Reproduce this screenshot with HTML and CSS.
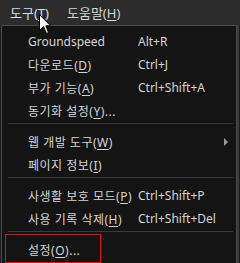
FILE: index.html
```html
<!DOCTYPE html>
<html lang="ko">
<head>
  <meta charset="UTF-8">
  <title>도구 메뉴</title>
  <link rel="stylesheet" href="styles.css">
</head>
<body>
  <div class="menubar">
    <div class="menu-title active">도구(<u>T</u>)</div>
    <div class="menu-title">도움말(<u>H</u>)</div>
  </div>

  <div class="dropdown">
    <div class="item"><span>Groundspeed</span><span class="key">Alt+R</span></div>
    <div class="item"><span class="ko">다운로드(<u>D</u>)</span><span class="key">Ctrl+J</span></div>
    <div class="item"><span class="ko">부가 기능(<u>A</u>)</span><span class="key">Ctrl+Shift+A</span></div>
    <div class="item"><span class="ko">동기화 설정(<u>Y</u>)...</span><span class="key"></span></div>
    <div class="sep"></div>
    <div class="item submenu"><span class="ko">웹 개발 도구(<u>W</u>)</span><span class="key"></span></div>
    <div class="item"><span class="ko">페이지 정보(<u>I</u>)</span><span class="key"></span></div>
    <div class="sep"></div>
    <div class="item"><span class="ko">사생활 보호 모드(<u>P</u>)</span><span class="key">Ctrl+Shift+P</span></div>
    <div class="item"><span class="ko">사용 기록 삭제(<u>H</u>)</span><span class="key">Ctrl+Shift+Del</span></div>
    <div class="sep"></div>
    <div class="item"><span class="ko">설정(<u>O</u>)...</span><span class="key"></span></div>
  </div>

  <div class="highlight"></div>

  <svg class="cursor" width="13" height="21" viewBox="0 0 13 21">
    <path d="M0.5 0.5 L0.5 16.5 L4.5 12.5 L7.5 19.5 L9.5 18.5 L6.8 11.8 L11.5 11.8 Z" fill="#fff" stroke="#000" stroke-width="1"/>
  </svg>
</body>
</html>
```

FILE: styles.css
```css
body {
  margin: 0;
  width: 240px;
  height: 263px;
  overflow: hidden;
  position: relative;
  background: #1c1c22;
  font-family: "Noto Sans", "Noto Sans CJK KR", sans-serif;
  font-size: 12px;
  color: #d4d4d4;
}
u {
  text-decoration: underline;
  text-underline-offset: 2px;
}
.menubar {
  height: 25px;
  display: flex;
  align-items: center;
  gap: 18px;
  padding-left: 10px;
  background: #2c2c2c;
  font-size: 13px;
}
.menu-title.active {
  color: #cfe0f0;
}
.dropdown {
  box-sizing: border-box;
  margin-left: 1px;
  width: 236px;
  height: 238px;
  border: 1px solid #4a4a4a;
  border-bottom: none;
  background: #141414;
  padding-top: 4px;
  box-shadow: 2px 0 0 #3a3a3a;
}
.item {
  height: 23px;
  display: grid;
  grid-template-columns: 110px 1fr;
  align-items: center;
  padding-left: 26px;
  position: relative;
  white-space: nowrap;
}
.ko {
  letter-spacing: 0.5px;
}
.submenu::after {
  content: "";
  position: absolute;
  right: 8px;
  top: 8px;
  border-left: 4px solid #9a9a9a;
  border-top: 4px solid transparent;
  border-bottom: 4px solid transparent;
}
.sep {
  height: 1px;
  background: #3a3a3a;
  margin: 1px 3px 6px 6px;
}
/* red box drawn over the last entry */
.highlight {
  position: absolute;
  left: 5px;
  top: 234px;
  width: 94px;
  height: 27px;
  border: 1px solid #e01010;
}
.cursor {
  position: absolute;
  left: 39px;
  top: 14px;
}
```
